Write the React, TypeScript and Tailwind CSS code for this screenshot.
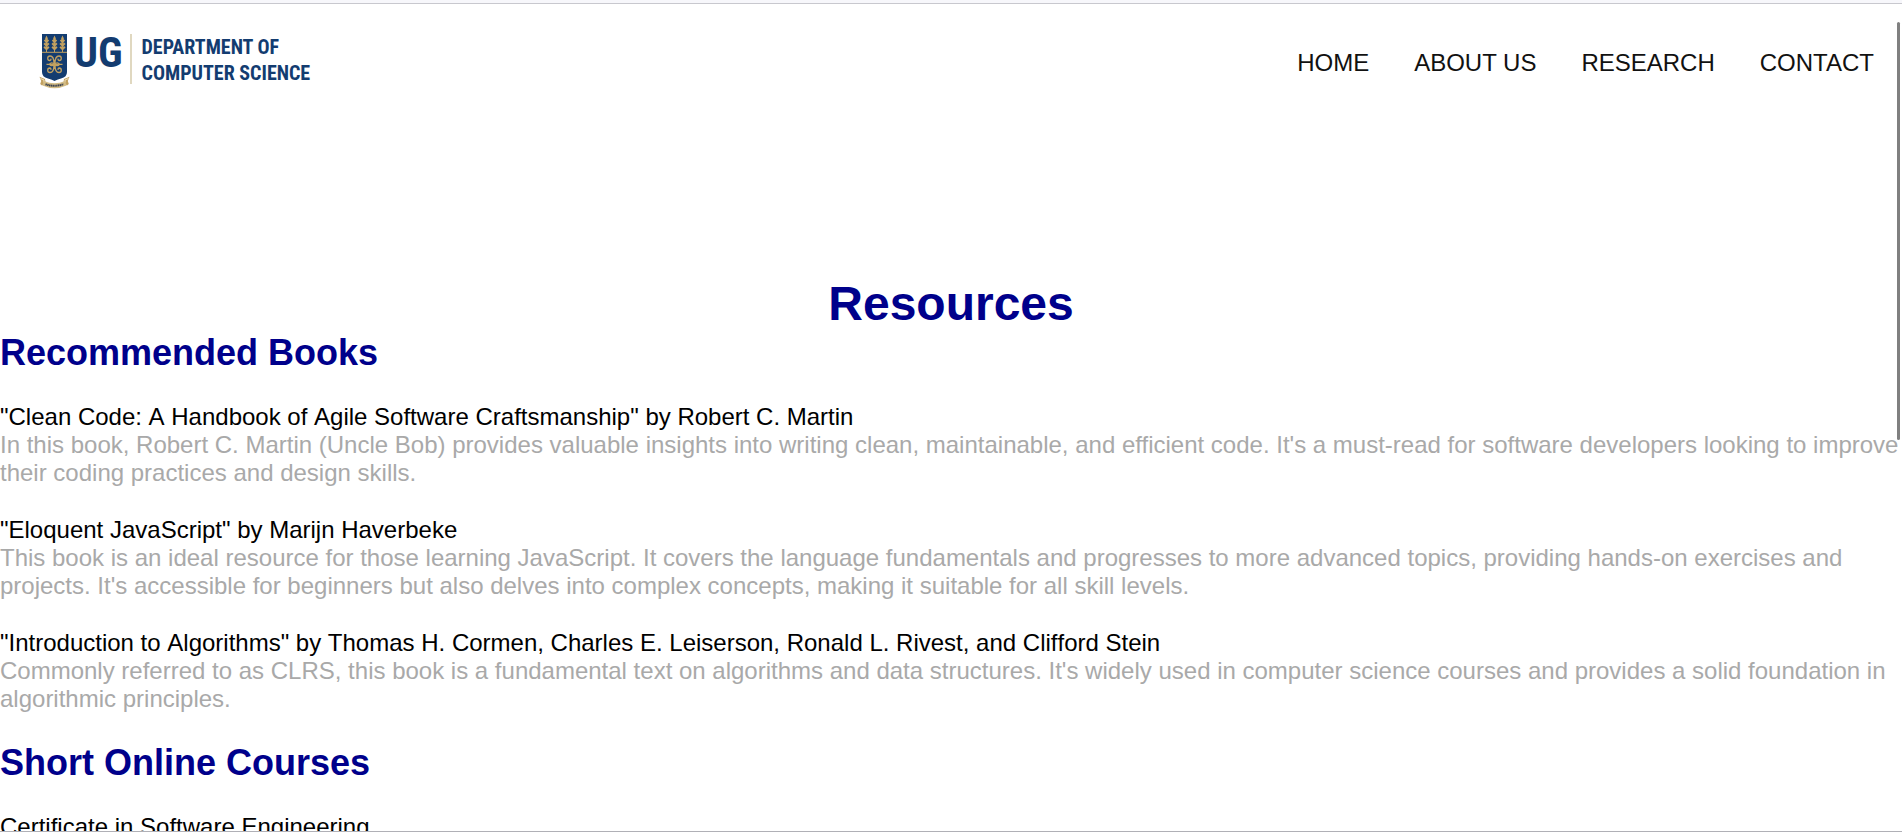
const navItems = [
  { label: "HOME", href: "#home" },
  { label: "ABOUT US", href: "#about" },
  { label: "RESEARCH", href: "#research" },
  { label: "CONTACT", href: "#contact" },
];

const books = [
  {
    title: '"Clean Code: A Handbook of Agile Software Craftsmanship" by Robert C. Martin',
    text: "In this book, Robert C. Martin (Uncle Bob) provides valuable insights into writing clean, maintainable, and efficient code. It's a must-read for software developers looking to improve their coding practices and design skills.",
  },
  {
    title: '"Eloquent JavaScript" by Marijn Haverbeke',
    text: "This book is an ideal resource for those learning JavaScript. It covers the language fundamentals and progresses to more advanced topics, providing hands-on exercises and projects. It's accessible for beginners but also delves into complex concepts, making it suitable for all skill levels.",
  },
  {
    title: '"Introduction to Algorithms" by Thomas H. Cormen, Charles E. Leiserson, Ronald L. Rivest, and Clifford Stein',
    text: "Commonly referred to as CLRS, this book is a fundamental text on algorithms and data structures. It's widely used in computer science courses and provides a solid foundation in algorithmic principles.",
  },
];

const courses = [{ title: "Certificate in Software Engineering", text: "" }];

function Wheat({ x }: { x: number }) {
  return (
    <g transform={`translate(${x} 0)`} stroke="#c2a160" fill="#c2a160">
      <path d="M0 4V18" strokeWidth="1" />
      <path d="M0 1.500L1.400 4.500L0 7L-1.400 4.500Z" stroke="none" />
      <path
        d="M-1.800 5.800L0 8L1.800 5.800M-2.300 9.300L0 11.500L2.300 9.300M-2.300 12.800L0 15L2.300 12.800"
        fill="none"
        strokeWidth="2.200"
      />
    </g>
  );
}

function Crest() {
  return (
    <svg viewBox="0 0 32 55" className="h-[55px] w-8" role="img" aria-label="University crest">
      <path d="M3 0H28V38Q28 43 22 44.500Q17.500 45.500 15.500 47Q13.500 45.500 9 44.500Q3 43 3 38Z" fill="#133c70" />
      <Wheat x={7.5} />
      <Wheat x={15.5} />
      <Wheat x={23.5} />
      <path d="M3 18.300H28" stroke="#c2a160" strokeWidth="1" />
      <g fill="none" stroke="#c2a160" strokeWidth="1.300">
        <path d="M7.500 30.300H23.500M15.500 26V35" />
        <path d="M15 29.500Q15 22 11 22Q8.700 22 8.700 24.300Q8.700 26.500 10.800 26.500Q12.300 26.300 11.800 24.600" />
        <path d="M16 29.500Q16 22 20 22Q22.300 22 22.300 24.300Q22.300 26.500 20.200 26.500Q18.700 26.300 19.200 24.600" />
        <path d="M15 31Q15 38.500 11 38.500Q8.700 38.500 8.700 36.200Q8.700 34 10.800 34Q12.300 34.200 11.800 35.900" />
        <path d="M16 31Q16 38.500 20 38.500Q22.300 38.500 22.300 36.200Q22.300 34 20.200 34Q18.700 34.200 19.200 35.900" />
        <path d="M10.500 30.300Q12.500 27.500 15.500 30.300Q12.500 33 10.500 30.300M20.500 30.300Q18.500 27.500 15.500 30.300Q18.500 33 20.500 30.300" />
      </g>
      <path d="M.5 42.800L6 45L6.500 48.500L3 51.500L1.200 50L2.200 47Z" fill="#c2a160" />
      <path d="M30.500 42.800L25 45L24.500 48.500L28 51.500L29.800 50L28.800 47Z" fill="#c2a160" />
      <path d="M1.500 44.500L5 46L5 48.500" fill="none" stroke="#f0e2c0" strokeWidth="1" />
      <path d="M29.500 44.500L26 46L26 48.500" fill="none" stroke="#f0e2c0" strokeWidth="1" />
      <path d="M5 47Q15.500 51.500 26 47L27.500 51.500Q15.500 57 3.500 51.500Z" fill="#d3bc85" />
      <path d="M6.500 50.200Q15.500 53.300 24.500 50.200" fill="none" stroke="#3c4350" strokeWidth="2" strokeDasharray="1.4 .4" />
    </svg>
  );
}

function Logo() {
  return (
    <a
      href="#home"
      className="flex items-start font-['Roboto_Condensed','Liberation_Sans',sans-serif] font-bold text-[#133c70]"
    >
      <Crest />
      <span className="ml-[3px] text-[42px] leading-[38px]">UG</span>
      <span className="ml-[7px] h-[50px] w-[2px] bg-[#e0d8c0]" />
      <span className="ml-[10px] flex flex-col text-[20px] leading-[26px] whitespace-nowrap">
        <span>DEPARTMENT OF</span>
        <span>COMPUTER SCIENCE</span>
      </span>
    </a>
  );
}

function ResourceSection({ heading, items }: { heading: string; items: { title: string; text: string }[] }) {
  return (
    <section>
      <h2 className="text-[36px] leading-[42px] font-bold text-[#00008b]">{heading}</h2>
      <div className="flex flex-col gap-[29px] py-[29px]">
        {items.map((item) => (
          <article key={item.title}>
            <h3 className="text-black [font-kerning:none]">{item.title}</h3>
            <p className="text-[#a9a9a9]">{item.text}</p>
          </article>
        ))}
      </div>
    </section>
  );
}

export default function App() {
  return (
    <div className="relative flex h-screen flex-col overflow-hidden border-b border-[#b0b0b6] bg-white font-['Liberation_Sans',Arial,sans-serif] text-[24px] leading-[28px]">
      <div className="h-1 shrink-0 border-b border-[#c8c8ce] bg-[#f7f7fb]" />
      <header className="flex shrink-0 items-start justify-between pt-[30px] pr-7 pl-[39px]">
        <Logo />
        <nav className="mt-[15px] flex gap-[45px] text-[#111111]">
          {navItems.map((item) => (
            <a key={item.label} href={item.href}>
              {item.label}
            </a>
          ))}
        </nav>
      </header>
      <main className="mt-[187px] shrink-0">
        <h1 className="text-center text-[48px] leading-[56px] font-bold text-[#00008b]">Resources</h1>
        <ResourceSection heading="Recommended Books" items={books} />
        <ResourceSection heading="Short Online Courses" items={courses} />
      </main>
      <div className="absolute top-[22px] right-[2px] h-[418px] w-[3px] rounded-sm bg-[#808080]" />
    </div>
  );
}
